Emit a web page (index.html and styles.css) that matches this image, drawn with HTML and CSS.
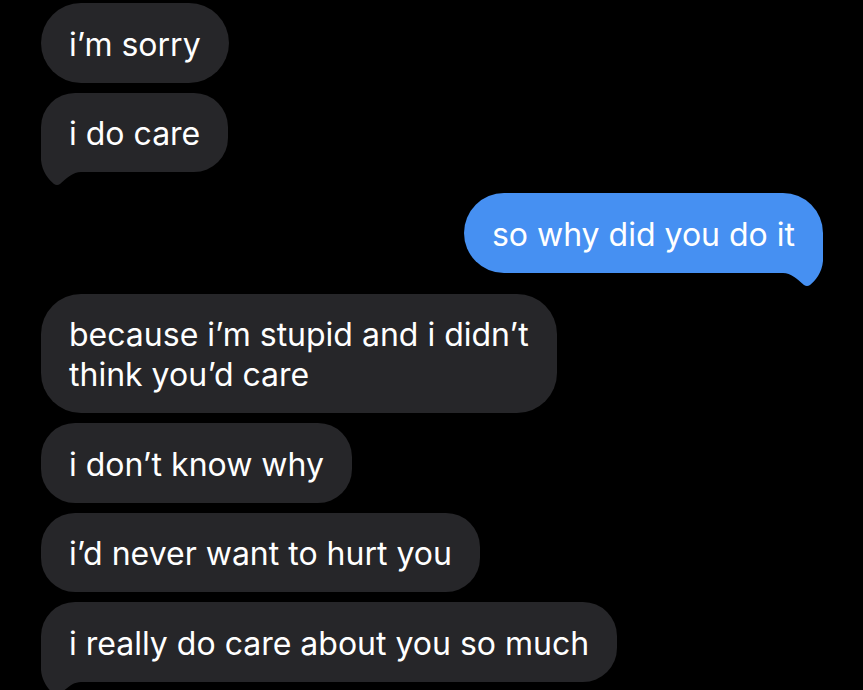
FILE: index.html
```html
<!DOCTYPE html>
<html>
<head>
<meta charset="utf-8">
<link rel="stylesheet" href="styles.css">
</head>
<body>
<div class="thread">
  <div class="group them">
    <div class="bubble">i’m sorry</div>
    <div class="bubble tailed">i do care<svg class="tail" viewBox="0 0 40 54" width="40" height="54"><path d="M0 0 L0 28 C1 40 8 48 13 52 Q16 54 19 52 C26 46 32 40 40 40 L40 0 Z"/></svg></div>
  </div>
  <div class="group me">
    <div class="bubble tailed">so why did you do it<svg class="tail" viewBox="0 0 40 54" width="40" height="54"><path d="M40 0 L40 28 C39 40 32 48 27 52 Q24 54 21 52 C14 46 8 40 0 40 L0 0 Z"/></svg></div>
  </div>
  <div class="group them">
    <div class="bubble">because i’m stupid and i didn’t<br>think you’d care</div>
    <div class="bubble">i don’t know why</div>
    <div class="bubble">i’d never want to hurt you</div>
    <div class="bubble tailed">i really do care about you so much<svg class="tail" viewBox="0 0 40 54" width="40" height="54"><path d="M0 0 L0 28 C1 40 8 48 13 52 Q16 54 19 52 C26 46 32 40 40 40 L40 0 Z"/></svg></div>
  </div>
</div>
</body>
</html>
```
FILE: styles.css
```css
html, body {
  margin: 0;
  padding: 0;
  background: #000;
  height: 100%;
  overflow: hidden;
}
.thread {
  display: flex;
  flex-direction: column;
  gap: 21px;
  padding: 3px 40px 0 41px;
  font-family: "Inter", "Roboto", sans-serif;
  font-size: 32px;
  letter-spacing: 0;
  color: #fff;
}
.group {
  display: flex;
  flex-direction: column;
  gap: 10px;
}
.them { align-items: flex-start; }
.me { align-items: flex-end; }
.bubble {
  position: relative;
  z-index: 0;
  padding: 21.5px 28px 18px;
  line-height: 40px;
  border-radius: 40px;
  background: #262629;
}
.them .bubble { border-radius: 34px; }
.them .bubble:first-child { border-radius: 40px; }
.me .bubble { background: #4690f2; }
.tail {
  position: absolute;
  z-index: -1;
  bottom: -14px;
  fill: #262629;
}
.them .tail { left: 0; }
.me .tail { right: 0; fill: #4690f2; }
```
